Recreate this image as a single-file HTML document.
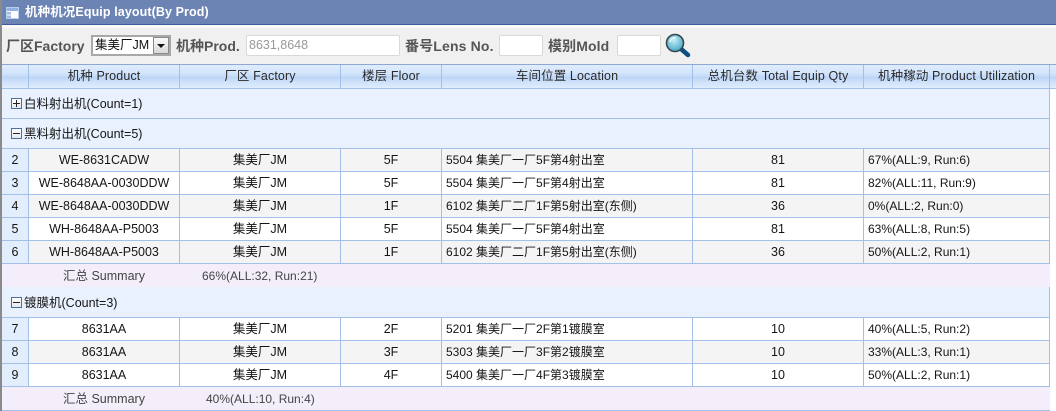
<!DOCTYPE html>
<html><head><meta charset="utf-8">
<style>
html,body{margin:0;padding:0;background:#fff}
#p{position:relative;width:1056px;height:411px;overflow:hidden;font-family:"Liberation Sans","Noto Sans CJK SC",sans-serif;font-size:12.5px;color:#151515;background:#fff}
#p div,#p span.a{position:absolute;box-sizing:border-box}
.h{height:24px;line-height:23px;text-align:center;top:65px;color:#2a2a2a;white-space:nowrap;font-size:12.5px;letter-spacing:.12px}
.c{height:22px;line-height:22px;white-space:nowrap;text-align:center}
.l{text-align:left;padding-left:4px;font-size:12px}
.vl{width:1px;background:#a3c0e8}
.hl{height:1px;background:#a3c0e8;left:2px}
.g{left:2px;width:1048px;background:#e9f1fe}
.s{left:2px;width:1048px;background:#f4eefb}
.r{left:29px;width:1021px}
.n{left:2px;width:26px;background:#e2eefd}
.b{font-weight:bold;color:#555;font-size:14px;line-height:20px;top:36px;white-space:nowrap;height:20px}
.in{background:#fff;border:1px solid #d9d9d9;top:35px;height:21px;border-radius:2px}
.tg{left:11px;width:11px;height:11px;border:1px solid #4a6f9e;background:linear-gradient(#fff,#e4e8ee)}
.tg i{position:absolute;left:1px;top:4px;width:7px;height:1px;background:#222}
.tg b{position:absolute;left:4px;top:1px;width:1px;height:7px;background:#222}
</style></head><body><div id="p">
<div style="left:0;top:0;width:1056px;height:24px;background:#6c84b4"></div>
<div style="left:0;top:24px;width:1056px;height:1px;background:#3f5a9c"></div>
<div style="left:0;top:25px;width:1056px;height:3px;background:#fafafa"></div>
<div style="left:2px;top:28px;width:1054px;height:36px;background:#f0f0f0"></div>
<div style="left:0;top:0;width:2px;height:411px;background:#8a8a8a"></div>
<svg style="position:absolute;left:6px;top:7px" width="13" height="12"><rect x=".5" y=".5" width="12" height="11" fill="#fff" stroke="#b9cdee"/><rect x="1" y="1" width="11" height="3" fill="#8fb0e0"/><rect x="1" y="5" width="4" height="2.500" fill="#9db9e4"/><rect x="1" y="8.500" width="4" height="2.500" fill="#9db9e4"/></svg>
<div style="left:25px;top:3px;height:18px;line-height:18px;color:#fff;font-weight:bold;font-size:12.5px;letter-spacing:.1px;white-space:nowrap">机种机况Equip layout(By Prod)</div>

<div class="b" style="left:6px">厂区Factory</div>
<div style="left:91px;top:35px;width:80px;height:21px;background:#fff;border:2px solid #a8a8a8"></div>
<div style="left:95px;top:37px;height:17px;line-height:17px;font-size:12.5px;color:#111">集美厂JM</div>
<div style="left:153px;top:37px;width:16px;height:17px;background:linear-gradient(#fafafa,#d8d8d8);border:1px solid #8a8a8a"></div>
<svg style="position:absolute;left:157px;top:44px" width="8" height="4"><path d="M0 0H8L4 4Z" fill="#111"/></svg>
<div class="b" style="left:176px">机种Prod.</div>
<div class="in" style="left:246px;width:154px;padding-left:2px;line-height:19px;color:#999;font-size:12.5px">8631,8648</div>
<div class="b" style="left:405px;letter-spacing:.15px">番号Lens No.</div>
<div class="in" style="left:499px;width:44px"></div>
<div class="b" style="left:548px;letter-spacing:.1px">模别Mold</div>
<div class="in" style="left:617px;width:44px"></div>
<svg style="position:absolute;left:665px;top:33px" width="26" height="26" viewBox="0 0 26 26"><defs><radialGradient id="m" cx=".45" cy=".35" r=".7"><stop offset="0" stop-color="#c4eef7"/><stop offset="1" stop-color="#3aa2c4"/></radialGradient></defs><path d="M15.500 15.500L23 22" stroke="#0d4f80" stroke-width="4.500" stroke-linecap="round"/><circle cx="10" cy="10" r="8.500" fill="url(#m)" stroke="#3a464c" stroke-width="1.600"/><path d="M5 9C5.500 6 8 4.500 11 4.500" stroke="#f0fbfd" stroke-width="1.500" fill="none"/></svg>

<div style="left:2px;top:64px;width:1054px;height:25px;background:linear-gradient(#e0edfd 0%,#d3e5fc 35%,#bdd6f7 55%,#d3e5fc 80%,#dfecfd 100%);border-top:1px solid #8fa8d0;border-bottom:1px solid #a3c0e8"></div>
<div class="h" style="left:29px;width:150px">机种 Product</div>
<div class="h" style="left:180px;width:160px">厂区 Factory</div>
<div class="h" style="left:341px;width:100px">楼层 Floor</div>
<div class="h" style="left:442px;width:250px">车间位置 Location</div>
<div class="h" style="left:693px;width:170px">总机台数 Total Equip Qty</div>
<div class="h" style="left:864px;width:185px">机种稼动 Product Utilization</div>

<div class="g" style="top:89px;height:29px"></div>
<div class="g" style="top:119px;height:29px"></div>
<div class="g" style="top:287px;height:30px"></div>
<div class="s" style="top:264px;height:23px"></div>
<div class="s" style="top:387px;height:23px"></div>

<div class="r" style="top:149px;height:22px;background:#f4f4f4"></div>
<div class="r" style="top:195px;height:22px;background:#f4f4f4"></div>
<div class="r" style="top:241px;height:22px;background:#f4f4f4"></div>
<div class="r" style="top:341px;height:22px;background:#f4f4f4"></div>
<div class="n" style="top:149px;height:114px"></div>
<div class="n" style="top:318px;height:68px"></div>

<div class="hl" style="top:88px;width:1048px"></div>
<div class="hl" style="top:118px;width:1048px"></div>
<div class="hl" style="top:148px;width:1048px"></div>
<div class="hl" style="top:171px;width:1048px"></div>
<div class="hl" style="top:194px;width:1048px"></div>
<div class="hl" style="top:217px;width:1048px"></div>
<div class="hl" style="top:240px;width:1048px"></div>
<div class="hl" style="top:263px;width:1048px"></div>
<div class="hl" style="top:317px;width:1048px"></div>
<div class="hl" style="top:340px;width:1048px"></div>
<div class="hl" style="top:363px;width:1048px"></div>
<div class="hl" style="top:386px;width:1048px"></div>
<div class="hl" style="top:410px;width:1048px"></div>

<div class="vl" style="left:28px;top:65px;height:24px"></div>
<div class="vl" style="left:179px;top:65px;height:24px"></div>
<div class="vl" style="left:340px;top:65px;height:24px"></div>
<div class="vl" style="left:441px;top:65px;height:24px"></div>
<div class="vl" style="left:692px;top:65px;height:24px"></div>
<div class="vl" style="left:863px;top:65px;height:24px"></div>
<div class="vl" style="left:1049px;top:65px;height:24px"></div>

<div class="vl" style="left:28px;top:148px;height:116px"></div>
<div class="vl" style="left:179px;top:148px;height:116px"></div>
<div class="vl" style="left:340px;top:148px;height:116px"></div>
<div class="vl" style="left:441px;top:148px;height:116px"></div>
<div class="vl" style="left:692px;top:148px;height:116px"></div>
<div class="vl" style="left:863px;top:148px;height:116px"></div>
<div class="vl" style="left:28px;top:317px;height:70px"></div>
<div class="vl" style="left:179px;top:317px;height:70px"></div>
<div class="vl" style="left:340px;top:317px;height:70px"></div>
<div class="vl" style="left:441px;top:317px;height:70px"></div>
<div class="vl" style="left:692px;top:317px;height:70px"></div>
<div class="vl" style="left:863px;top:317px;height:70px"></div>
<div class="vl" style="left:1049px;top:89px;height:175px"></div>
<div class="vl" style="left:1049px;top:287px;height:100px"></div>

<div class="tg" style="top:98px"><i></i><b></b></div>
<div class="c" style="left:24px;top:93px">白料射出机(Count=1)</div>
<div class="tg" style="top:128px"><i></i></div>
<div class="c" style="left:24px;top:123px">黑料射出机(Count=5)</div>
<div class="tg" style="top:297px"><i></i></div>
<div class="c" style="left:24px;top:292px">镀膜机(Count=3)</div>

<div class="c" style="left:2px;width:26px;top:149px">2</div><div class="c" style="left:29px;width:150px;top:149px">WE-8631CADW</div><div class="c" style="left:180px;width:160px;top:149px">集美厂JM</div><div class="c" style="left:341px;width:100px;top:149px">5F</div><div class="c l" style="left:442px;top:149px">5504 集美厂一厂5F第4射出室</div><div class="c" style="left:693px;width:170px;top:149px">81</div><div class="c l" style="left:864px;top:149px">67%(ALL:9, Run:6)</div>
<div class="c" style="left:2px;width:26px;top:172px">3</div><div class="c" style="left:29px;width:150px;top:172px">WE-8648AA-0030DDW</div><div class="c" style="left:180px;width:160px;top:172px">集美厂JM</div><div class="c" style="left:341px;width:100px;top:172px">5F</div><div class="c l" style="left:442px;top:172px">5504 集美厂一厂5F第4射出室</div><div class="c" style="left:693px;width:170px;top:172px">81</div><div class="c l" style="left:864px;top:172px">82%(ALL:11, Run:9)</div>
<div class="c" style="left:2px;width:26px;top:195px">4</div><div class="c" style="left:29px;width:150px;top:195px">WE-8648AA-0030DDW</div><div class="c" style="left:180px;width:160px;top:195px">集美厂JM</div><div class="c" style="left:341px;width:100px;top:195px">1F</div><div class="c l" style="left:442px;top:195px">6102 集美厂二厂1F第5射出室(东侧)</div><div class="c" style="left:693px;width:170px;top:195px">36</div><div class="c l" style="left:864px;top:195px">0%(ALL:2, Run:0)</div>
<div class="c" style="left:2px;width:26px;top:218px">5</div><div class="c" style="left:29px;width:150px;top:218px">WH-8648AA-P5003</div><div class="c" style="left:180px;width:160px;top:218px">集美厂JM</div><div class="c" style="left:341px;width:100px;top:218px">5F</div><div class="c l" style="left:442px;top:218px">5504 集美厂一厂5F第4射出室</div><div class="c" style="left:693px;width:170px;top:218px">81</div><div class="c l" style="left:864px;top:218px">63%(ALL:8, Run:5)</div>
<div class="c" style="left:2px;width:26px;top:241px">6</div><div class="c" style="left:29px;width:150px;top:241px">WH-8648AA-P5003</div><div class="c" style="left:180px;width:160px;top:241px">集美厂JM</div><div class="c" style="left:341px;width:100px;top:241px">1F</div><div class="c l" style="left:442px;top:241px">6102 集美厂二厂1F第5射出室(东侧)</div><div class="c" style="left:693px;width:170px;top:241px">36</div><div class="c l" style="left:864px;top:241px">50%(ALL:2, Run:1)</div>

<div class="c" style="left:63px;top:265px;color:#444">汇总 Summary</div>
<div class="c" style="left:202px;top:265px;color:#444;font-size:12px">66%(ALL:32, Run:21)</div>

<div class="c" style="left:2px;width:26px;top:318px">7</div><div class="c" style="left:29px;width:150px;top:318px">8631AA</div><div class="c" style="left:180px;width:160px;top:318px">集美厂JM</div><div class="c" style="left:341px;width:100px;top:318px">2F</div><div class="c l" style="left:442px;top:318px">5201 集美厂一厂2F第1镀膜室</div><div class="c" style="left:693px;width:170px;top:318px">10</div><div class="c l" style="left:864px;top:318px">40%(ALL:5, Run:2)</div>
<div class="c" style="left:2px;width:26px;top:341px">8</div><div class="c" style="left:29px;width:150px;top:341px">8631AA</div><div class="c" style="left:180px;width:160px;top:341px">集美厂JM</div><div class="c" style="left:341px;width:100px;top:341px">3F</div><div class="c l" style="left:442px;top:341px">5303 集美厂一厂3F第2镀膜室</div><div class="c" style="left:693px;width:170px;top:341px">10</div><div class="c l" style="left:864px;top:341px">33%(ALL:3, Run:1)</div>
<div class="c" style="left:2px;width:26px;top:364px">9</div><div class="c" style="left:29px;width:150px;top:364px">8631AA</div><div class="c" style="left:180px;width:160px;top:364px">集美厂JM</div><div class="c" style="left:341px;width:100px;top:364px">4F</div><div class="c l" style="left:442px;top:364px">5400 集美厂一厂4F第3镀膜室</div><div class="c" style="left:693px;width:170px;top:364px">10</div><div class="c l" style="left:864px;top:364px">50%(ALL:2, Run:1)</div>

<div class="c" style="left:63px;top:388px;color:#444">汇总 Summary</div>
<div class="c" style="left:206px;top:388px;color:#444;font-size:12px">40%(ALL:10, Run:4)</div>
</div></body></html>
